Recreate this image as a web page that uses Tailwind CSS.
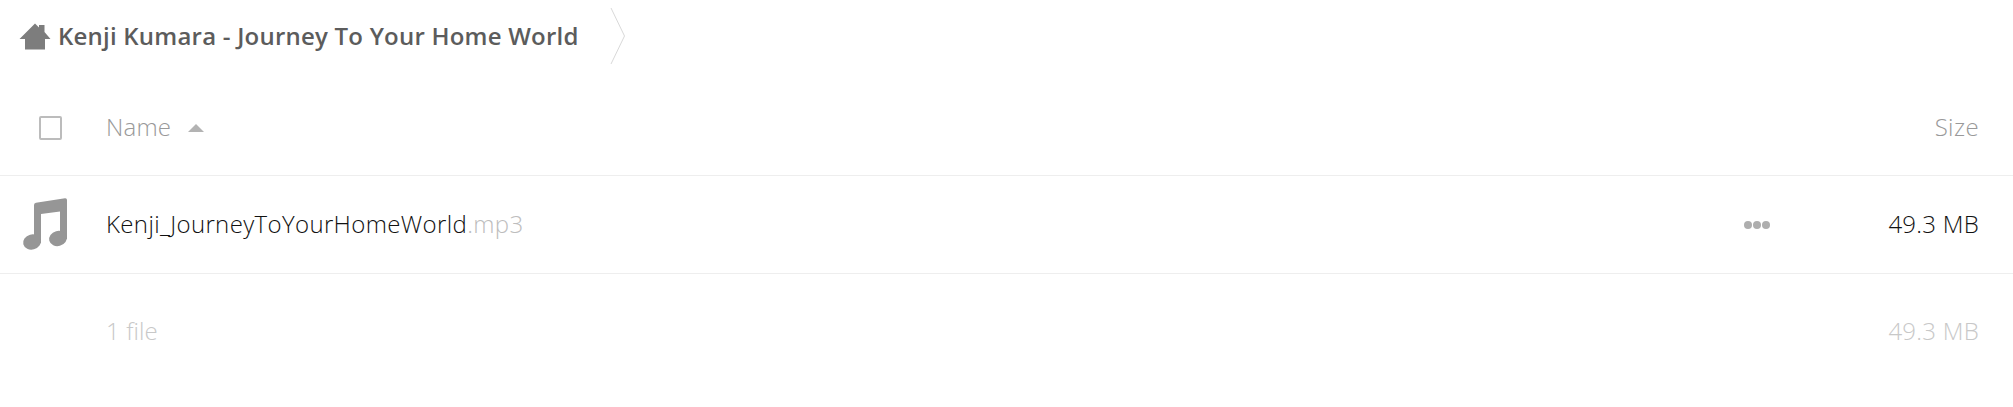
<!DOCTYPE html>
<html><head><meta charset="utf-8"><script src="https://cdn.jsdelivr.net/npm/@tailwindcss/browser@4"></script></head>
<body class="bg-white overflow-hidden font-['Open_Sans',sans-serif] font-light">
<div class="h-[407px] w-[2013px] flex flex-col">
  <div class="h-[72px] flex items-center pl-[19px]">
    <svg class="w-[32px] h-[30px] mr-[7px] -mt-[2px]" viewBox="0 0 32 30"><path fill="#7d7d7d" d="M16 3.500 L20 7.500 V5 H25.500 V12 L31.500 19 H26 V29.500 H6 V19 H0.500 Z"/></svg>
    <span class="text-[24px] leading-[32px] font-semibold tracking-[0.22px] text-[#5c5c5c] whitespace-nowrap">Kenji Kumara - Journey To Your Home World</span>
    <svg class="ml-[31px] w-[16px] h-[58px]" viewBox="0 0 16 58"><path fill="none" stroke="#d9d9d9" d="M1 1 L14.500 29 L1 57"/></svg>
  </div>
  <div class="h-[104px] flex items-center border-b border-[#eeeeee] pt-[6px]">
    <div class="w-[107px] pl-[39px]"><div class="w-[23px] h-[24px] border-2 border-[#bcbcbc] rounded-[2px] mt-[2px]"></div></div>
    <span class="text-[24px] text-[#999] leading-[32px] tracking-[0.2px] -ml-[1px]">Name</span>
    <span class="ml-[17px] mt-[2px] w-0 h-0 border-x-[8px] border-x-transparent border-b-[8px] border-b-[#b3b3b3]"></span>
    <span class="ml-auto mr-[34px] text-[24px] text-[#999] leading-[32px] tracking-[0.4px]">Size</span>
  </div>
  <div class="h-[98px] flex items-center border-b border-[#eeeeee]">
    <div class="w-[107px] pl-[20px]">
      <svg class="w-[50px] h-[56px] -mt-[1px]" viewBox="0 0 50 56"><g fill="#969696"><path d="M14 9 Q14 7 16 6.700 L45 2.200 Q47 2 47 4 V43 H40 V15.500 L21 18 V47 H14 Z"/><ellipse cx="12" cy="46" rx="9" ry="7.500" transform="rotate(-15 12 46)"/><ellipse cx="38" cy="42.500" rx="9" ry="7.500" transform="rotate(-15 38 42.500)"/></g></svg>
    </div>
    <span class="-ml-[1px] -mt-[2px] text-[24px] leading-[32px] tracking-[0.36px] text-[#111] whitespace-nowrap">Kenji_JourneyToYourHomeWorld<span class="text-[#bdbdbd]">.mp3</span></span>
    <div class="ml-auto flex gap-[1px] mr-[118px]"><i class="block w-[8px] h-[8px] rounded-full bg-[#aeaeae]"></i><i class="block w-[8px] h-[8px] rounded-full bg-[#aeaeae]"></i><i class="block w-[8px] h-[8px] rounded-full bg-[#aeaeae]"></i></div>
    <span class="mr-[34px] -mt-[2px] text-[24px] leading-[32px] tracking-[0.25px] text-[#111]">49.3 MB</span>
  </div>
  <div class="h-[112px] flex items-center pt-[1px]">
    <span class="ml-[106px] text-[24px] leading-[32px] tracking-[0.1px] text-[#c8c8c8]">1 file</span>
    <span class="ml-auto mr-[34px] text-[24px] leading-[32px] tracking-[0.25px] text-[#c8c8c8]">49.3 MB</span>
  </div>
</div>
</body></html>
